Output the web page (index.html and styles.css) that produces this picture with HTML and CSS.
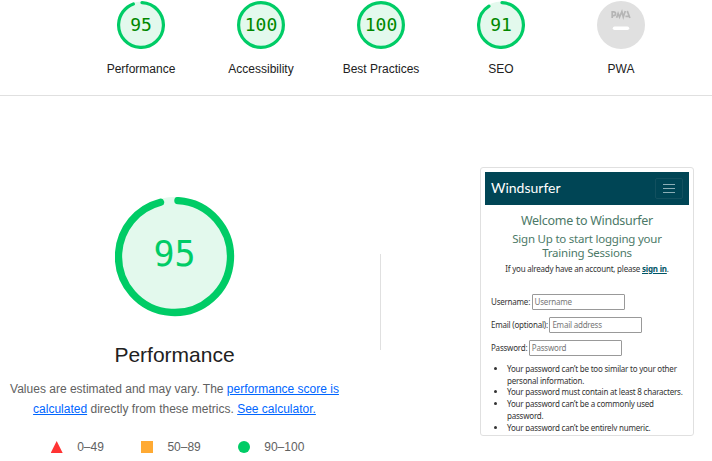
FILE: index.html
```html
<!DOCTYPE html>
<html lang="en">
<head>
<meta charset="utf-8">
<title>Performance report</title>
<link rel="stylesheet" href="styles.css">
</head>
<body>
<header class="scores">
  <a class="score"><svg class="gauge" viewBox="0 0 120 120"><circle class="base" cx="60" cy="60" r="59"/><circle class="arc" cx="60" cy="60" r="56" pathLength="100" stroke-dasharray="93.3 100" transform="rotate(-87.5 60 60)"/></svg><b class="value">95</b><span class="label">Performance</span></a>
  <a class="score"><svg class="gauge" viewBox="0 0 120 120"><circle class="base" cx="60" cy="60" r="59"/><circle class="arc" cx="60" cy="60" r="56"/></svg><b class="value">100</b><span class="label">Accessibility</span></a>
  <a class="score"><svg class="gauge" viewBox="0 0 120 120"><circle class="base" cx="60" cy="60" r="59"/><circle class="arc" cx="60" cy="60" r="56"/></svg><b class="value">100</b><span class="label">Best Practices</span></a>
  <a class="score"><svg class="gauge" viewBox="0 0 120 120"><circle class="base" cx="60" cy="60" r="59"/><circle class="arc" cx="60" cy="60" r="56" pathLength="100" stroke-dasharray="89.8 100" transform="rotate(-87.5 60 60)"/></svg><b class="value">91</b><span class="label">SEO</span></a>
  <a class="score"><svg class="gauge" viewBox="0 0 48 48"><circle cx="24" cy="24" r="24" fill="#e0e0e0"/><g fill="none" stroke="#b5b5b5" stroke-width="1.7"><path d="M15.2 17v-6.1h1.5a1.8 1.8 0 0 1 0 3.7h-1.5"/><path d="M19.6 16.8l1.5-4.4 1.4 3.6 2.4-5.4 1.4 5.4 2-6"/><path d="M28.4 15.4h3.2M29.8 11.5l.8-.6 2.3 6.1"/></g><path d="M17.5 27.2h13" stroke="#fff" stroke-width="3.4" stroke-linecap="round"/></svg><span class="label">PWA</span></a>
</header>
<main class="category">
  <section class="summary">
    <div class="hero"><svg class="gauge" viewBox="0 0 120 120"><circle class="base" cx="59.5" cy="59.5" r="59.5"/><circle class="arc" cx="59.5" cy="59.5" r="56" pathLength="100" stroke-dasharray="95 100" transform="rotate(-86.5 59.5 59.5)"/></svg><span class="value">95</span></div>
    <h1>Performance</h1>
    <p class="description">Values are estimated and may vary. The <a>performance score is<br>calculated</a> directly from these metrics. <a>See calculator.</a></p>
    <div class="scale">
      <span><i class="triangle"></i>0–49</span><span><i class="square"></i>50–89</span><span><i class="circle"></i>90–100</span>
    </div>
  </section>
  <div class="divider"></div>
  <aside class="preview">
    <div class="screen">
      <nav><span>Windsurfer</span><button><svg viewBox="0 0 14 12"><path d="M1 1.5h12M1 5.5h12M1 9.5h12"/></svg></button></nav>
      <h2>Welcome to Windsurfer</h2>
      <h3>Sign Up to start logging your<br>Training Sessions</h3>
      <p class="signin">If you already have an account, please <a>sign in</a>.</p>
      <form>
        <div class="field"><label>Username:</label><span class="input">Username</span></div>
        <div class="field"><label>Email (optional):</label><span class="input">Email address</span></div>
        <div class="field"><label>Password:</label><span class="input">Password</span></div>
      </form>
      <ul><li>Your password can’t be too similar to your other<br>personal information.</li><li>Your password must contain at least 8 characters.</li><li>Your password can’t be a commonly used<br>password.</li><li>Your password can’t be entirely numeric.</li></ul>
    </div>
  </aside>
</main>
</body>
</html>
```
FILE: styles.css
```css
* { box-sizing: border-box; }
body { margin: 0; width: 712px; height: 461px; overflow: hidden; background: #fff; color: #212121; font: 12px/20px "Liberation Sans", Arial, sans-serif; }
h1, h2, h3, p, ul { margin: 0; font-weight: normal; }
.scores { display: flex; height: 96px; padding: 1px 0 0 81px; border-bottom: 1px solid #e0e0e0; }
.score { display: grid; grid-template: 48px 40px / 120px; justify-items: center; align-items: center; }
.score .gauge { grid-area: 1 / 1; width: 48px; height: 48px; }
.gauge { display: block; }
.base { fill: #e3f9ed; }
.arc { fill: none; stroke: #0c6; stroke-width: 8; stroke-linecap: round; }
.score .value { grid-area: 1 / 1; color: #080; font: 18px/24px "DejaVu Sans Mono", monospace; }
.label { grid-area: 2 / 1; }
.category { display: flex; height: 365px; }
.summary { width: 349px; padding: 101px 0 0; display: flex; flex-direction: column; align-items: center; }
.hero { display: grid; width: 120px; height: 120px; place-items: center; }
.hero .gauge { grid-area: 1 / 1; width: 120px; height: 120px; }
.hero .arc { stroke-width: 7.3; }
.hero .value { grid-area: 1 / 1; color: #0c6; font: 35px/40px "DejaVu Sans Mono", monospace; padding-bottom: 7px; }
h1 { margin-top: 26px; font-size: 21px; line-height: 24px; }
.description { margin-top: 12px; color: #616161; text-align: center; white-space: nowrap; }
.description a { color: #06f; text-decoration: underline; }
.scale { display: flex; gap: 37px; margin: 18px 0 0 6px; color: #616161; }
.scale span { display: flex; align-items: center; }
.scale i { width: 12px; height: 12px; margin-right: 14.5px; }
.triangle { background: #f33; clip-path: polygon(50% 0, 100% 100%, 0 100%); }
.square { background: #fa3; }
.circle { background: #0c6; border-radius: 50%; }
.divider { width: 1px; height: 96px; margin: 158px 99px 0 31px; background: #e0e0e0; }
.preview { width: 214px; height: 269px; margin-top: 71px; padding: 4px; border: 1px solid #e0e0e0; border-radius: 3px; }
.screen { width: 204px; height: 259px; overflow: hidden; color: #333; font-family: "Noto Sans", "Open Sans", sans-serif; font-size: 8px; letter-spacing: -0.22px; white-space: nowrap; }
nav { height: 33px; padding: 0 6px; display: flex; align-items: center; justify-content: space-between; background: #004555; color: #fff; font: 14px/16px Lato, sans-serif; letter-spacing: 0; }
nav span { padding-bottom: 1px; }
nav button { width: 28px; height: 21px; padding: 0; display: grid; place-items: center; background: none; border: 1px solid #12505f; border-radius: 2px; }
nav svg { width: 14px; height: 12px; stroke: #8caeb6; fill: none; }
h2, h3 { color: #4c7968; text-align: center; }
h2 { margin-top: 8px; font-size: 12.5px; line-height: 15px; letter-spacing: -0.3px; }
h3 { margin-top: 4px; font-size: 11.5px; line-height: 14px; letter-spacing: -0.22px; }
.signin { margin-top: 3px; line-height: 12px; text-align: center; }
.signin a { color: #056; font-weight: bold; text-decoration: underline; }
form { padding: 19px 0 0 6px; }
.field { display: flex; height: 16px; margin-bottom: 7px; align-items: center; line-height: 14px; }
.input { width: 93px; height: 16px; margin-left: 1.5px; padding-left: 2px; border: 1px solid #999; border-radius: 1px; color: #777; }
ul { padding-left: 22px; line-height: 11.7px; margin-top: 1.5px; }
```
